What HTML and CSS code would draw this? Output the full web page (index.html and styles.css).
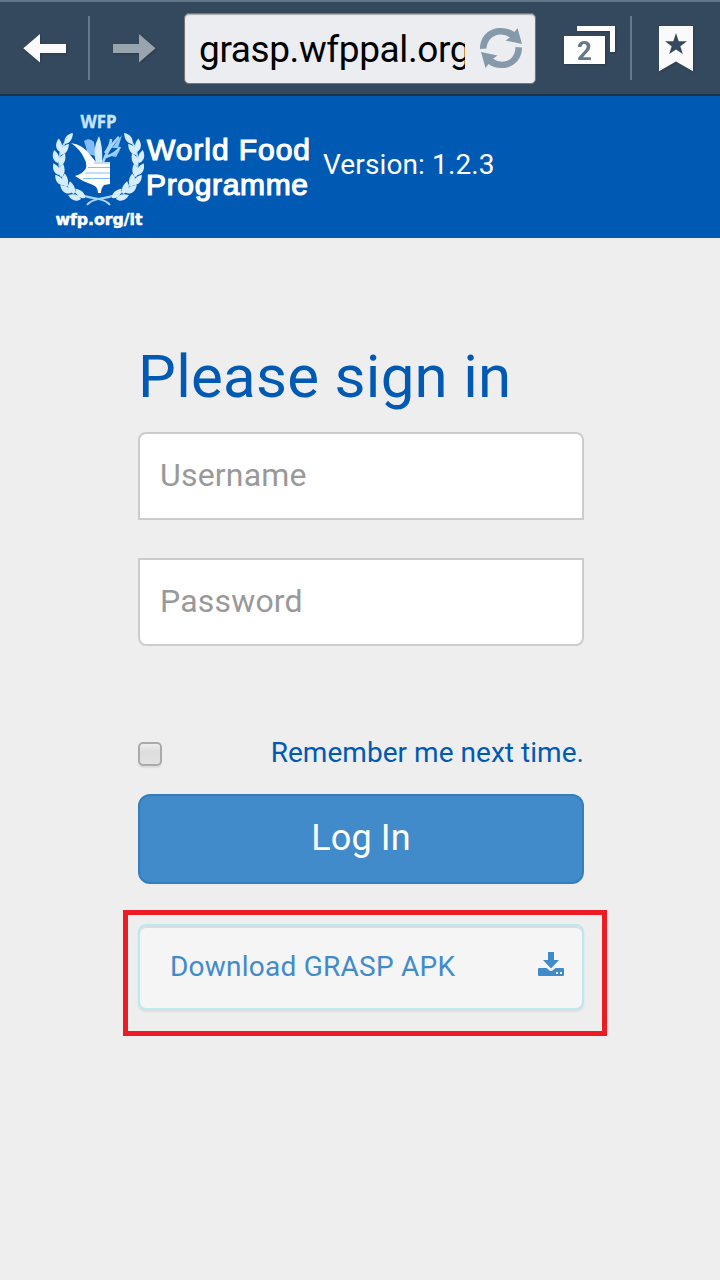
FILE: index.html
```html
<!DOCTYPE html>
<html lang="en">
<head>
<meta charset="utf-8">
<title>GRASP sign in</title>
<link rel="stylesheet" href="styles.css">
</head>
<body>
<nav class="toolbar">
  <svg class="back" width="48" height="36" viewBox="20 30 48 36"><path d="M23.300 48.300 40 34V44H66V53H40V62.500Z" fill="#fafafa"/></svg>
  <span class="divider"></span>
  <svg class="forward" width="48" height="36" viewBox="110 30 48 36"><path d="M113 44H139V34L155.500 48.300 139 62.500V53H113Z" fill="#98a4ae"/></svg>
  <div class="address">
    <span class="url">grasp.wfppal.org</span>
    <svg class="reload" width="44" height="44" viewBox="479 26 44 44" fill="#8599ab"><path d="M480 49C480 36 489 28 501 28Q509 28 514.500 32L517.500 28 522 44 505.500 40.500 510 37.500Q506 34.500 501 34.500C492 34.500 487 41 486.500 48.500Z"/><path d="M522 47.500C522 60 513 68 502 68Q493 68 488.500 64L485.500 68 481 52 497.500 55.500 493 58.800Q497 61.700 502 61.700C510.500 61.700 515.500 55 515.500 47Z"/></svg>
  </div>
  <svg class="tabs" width="56" height="42" viewBox="562 25 56 42"><path d="M577 26H615V52H610V31H577Z" fill="#fff"/><path d="M564 36H605V64H564Z" fill="#fff"/><text x="584.500" y="60" class="tab-count">2</text></svg>
  <span class="divider"></span>
  <svg class="bookmark" width="38" height="50" viewBox="657 24 38 50"><path d="M659 26H693V71.300L676 61.500 659 71.300Z" fill="#fafafa"/><path d="M676 33 678.700 41.300H687L680.300 46.300 682.800 54 676 49.400 669.200 54 671.700 46.300 665 41.300H673.300Z" fill="#34495e"/></svg>
</nav>
<header class="banner">
  <svg class="logo" width="264" height="126" viewBox="50 108 264 126">
    <defs>
      <path id="leaf" d="M0 0C-4.500 -3 -4.500 -9 0 -13.500C3.500 -8 3.500 -3 0 0Z"/>
      <g id="branch">
        <path d="M72 134C56 149 55 170 69 187Q77 196 99 199Q107 201 110 205" fill="none" stroke="#a6d5fc" stroke-width="2"/>
        <use href="#leaf" transform="translate(65 144) rotate(36)"/>
        <use href="#leaf" transform="translate(60 152) rotate(-5)"/>
        <use href="#leaf" transform="translate(61 155) rotate(36)"/>
        <use href="#leaf" transform="translate(58 163) rotate(-16)"/>
        <use href="#leaf" transform="translate(60 166) rotate(22)"/>
        <use href="#leaf" transform="translate(60 175) rotate(-29)"/>
        <use href="#leaf" transform="translate(61 177) rotate(9)"/>
        <use href="#leaf" transform="translate(64 185) rotate(-40)"/>
        <use href="#leaf" transform="translate(66 187) rotate(-5)"/>
        <use href="#leaf" transform="translate(71 193) rotate(-53)"/>
        <use href="#leaf" transform="translate(74 194) rotate(-18)"/>
        <use href="#leaf" transform="translate(81 199) rotate(-73)"/>
        <use href="#leaf" transform="translate(85 198) rotate(-45)"/>
      </g>
    </defs>
    <text x="80.500" y="127.500" class="logo-abbr" textLength="36" lengthAdjust="spacingAndGlyphs">WFP</text>
    <g fill="#d5edff"><use href="#branch"/><use href="#branch" transform="matrix(-1 0 0 1 197 0)"/></g>
    <path d="M84 141Q89 137 94 142L96 156 88 154Z" fill="#80bdfa"/>
    <path d="M99 136Q103 146 102 163H96Q92 149 99 136Z" fill="#d7edff"/>
    <path d="M103 162Q108 148 119 137M106 157Q117 153 120 147M105 153Q111 145 111 139" fill="none" stroke="#a5d4ff" stroke-width="2.600"/>
    <path d="M112 148l10-13-4 13ZM111 156l9-6-4 7Z" fill="#8fc8fd"/>
    <path d="M71 143Q84 145 91 156L96 162H110V184L104 185Q101 188 101 193H98Q98 187 93 185L83 181 75 176Q84 173 86 168 87 163 84 158Q80 149 71 143Z" fill="#fff"/>
    <path d="M88 167.500H110M85 173H110M83 178.500H110M94 163H110" stroke="#82bffa" stroke-width="1"/>
    <text x="55.500" y="225" class="logo-site" textLength="87" lengthAdjust="spacingAndGlyphs">wfp.org/it</text>
    <text x="147" y="159.500" class="logo-name" textLength="163" lengthAdjust="spacing">World Food</text>
    <text x="146" y="195" class="logo-name" textLength="162" lengthAdjust="spacing">Programme</text>
  </svg>
  <span class="version">Version: 1.2.3</span>
</header>
<main class="signin">
  <h1 class="title">Please sign in</h1>
  <input class="field field-top" type="text" placeholder="Username">
  <input class="field field-bottom" type="password" placeholder="Password">
  <label class="remember"><input class="check" type="checkbox"><span>Remember me next time.</span></label>
  <button class="login">Log In</button>
  <div class="highlight">
    <a class="download"><span>Download GRASP APK</span>
      <svg width="26" height="24" viewBox="0 0 26 24" fill="#428bca"><path d="M10 0H16V8H21L13 16.500 5 8H10Z"/><path fill-rule="evenodd" d="M1 16H8.500L11.500 18.500Q13 19.500 14.500 18.500L17.500 16H25Q26 16 26 17V23Q26 24 25 24H1Q0 24 0 23V17Q0 16 1 16ZM18 20V22H20V20ZM22 20V22H24V20Z"/></svg>
    </a>
  </div>
</main>
</body>
</html>
```

FILE: styles.css
```css
* { box-sizing: border-box; }
body { margin: 0; min-height: 1280px; background: #eee; font-family: Roboto, sans-serif; }
.toolbar { display: flex; align-items: center; height: 96px; padding: 0 25px 0 20px; background: #34495e; border-top: 2px solid #5f7688; border-bottom: 2px solid #1c3145; }
.toolbar svg { display: block; flex: none; filter: drop-shadow(1px 1px 1px #2226); }
.divider { flex: none; width: 2px; height: 64px; background: #65798a; }
.back { margin-right: 20px; }
.forward { margin: 0 26px 0 20px; }
.address { display: flex; align-items: center; flex: none; width: 352px; height: 71px; margin-right: 26px; padding: 0 11px 0 14px; background: #ebedf1; border: 1px solid #73777c; border-radius: 5px; box-shadow: inset 0 1px 1px #aaa; }
.url { width: 266px; margin-right: 14px; padding-top: 3px; overflow: hidden; white-space: nowrap; color: #000; font-size: 37px; line-height: 50px; letter-spacing: -.4px; }
.toolbar .reload { filter: none; }
.tabs { margin: -4px 12px 0 0; }
.tab-count { fill: #65798a; font: bold 26px Roboto, sans-serif; text-anchor: middle; }
.bookmark { margin: 2px 0 0 25px; }
.banner { display: flex; align-items: flex-start; height: 142px; padding: 12px 0 0 50px; background: #0059b3; }
.logo { display: block; flex: none; }
.logo-abbr { fill: #c4e4ff; stroke: #c4e4ff; stroke-width: .4px; font: bold 18px "Open Sans", sans-serif; }
.logo-site { fill: #fff; stroke: #fff; stroke-width: .5px; font: bold 15px "DejaVu Sans", sans-serif; }
.logo-name { fill: #fff; stroke: #fff; stroke-width: 1.2px; font: 30px "Liberation Sans", Arial, sans-serif; }
.version { margin: 40px 0 0 9px; color: #fff; font-size: 28px; line-height: 33px; letter-spacing: .12px; }
.signin { display: flex; flex-direction: column; width: 446px; margin: 0 0 0 138px; padding-top: 104px; }
.title { margin: 0 0 20px; color: #0059b3; font-size: 60px; font-weight: 400; line-height: 70px; letter-spacing: .28px; white-space: nowrap; }
.field { width: 446px; height: 88px; margin: 0; padding: 0 20px 3px; background: #fff; border: 2px solid #ccc; outline: 0; font: 32px Roboto, sans-serif; letter-spacing: .18px; }
.field::placeholder { color: #999; opacity: 1; }
.field-top { border-radius: 8px 8px 0 0; }
.field-bottom { margin-top: 38px; border-radius: 0 0 8px 8px; }
.remember { display: flex; justify-content: space-between; align-items: center; height: 34px; margin-top: 90px; color: #0059b3; font-size: 28px; line-height: 34px; letter-spacing: .04px; white-space: nowrap; }
.check { appearance: none; width: 24px; height: 24px; margin: 2px 0 0; border: 2px solid #aaa; border-radius: 5px; background: linear-gradient(#eee, #dcdcdc 40%, #e2e2e2); box-shadow: 0 2px 1px #ddd; }
.login { height: 90px; margin: 24px 0 0; padding: 0 0 2px; color: #fff; background: #428bca; border: 2px solid #357ebd; border-radius: 12px; font: 36px Roboto, sans-serif; letter-spacing: .1px; }
.highlight { width: 484px; height: 126px; margin: 26px 0 0 -15px; padding: 9px 18px 0 10px; border: 5px solid #ed1c24; }
.download { display: flex; align-items: center; justify-content: space-between; width: 446px; height: 86px; padding: 0 18px 1px 30px; color: #428bca; background: #f5f5f5; border: 2px solid #bce8f1; border-radius: 8px; box-shadow: inset 0 2px #ddd, 0 2px 2px #0001; font-size: 28px; letter-spacing: .24px; white-space: nowrap; }
.download svg { margin-top: -5px; }
```
